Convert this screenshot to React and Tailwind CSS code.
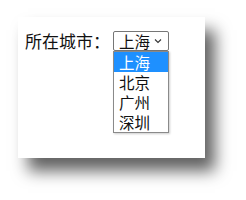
import React from 'react';

const cities = ['上海', '北京', '广州', '深圳'];

const App = () => {
  const [selected] = React.useState('上海');

  return (
    <div className="w-[246px] h-[200px] bg-white pt-[17px] pl-[18px] font-['Noto_Sans_CJK_SC',sans-serif]">
      <div className="w-[187px] h-[141px] bg-white shadow-[10px_13px_15px_rgba(0,0,0,0.62)] px-[7px] pt-[13px]">
        <div className="flex items-start">
          <span className="text-[17px] leading-[20px] text-[#111] mt-[1px]">所在城市：</span>
          <div className="relative ml-[3px] mt-[1px]">
            <div className="w-[56px] h-[20px] border border-[#767676] rounded-[2px] flex items-center pl-[5px] text-[15.5px] leading-[18px] text-[#111]">
              <span>{selected}</span>
              <svg className="ml-[4px]" width="8" height="6" viewBox="0 0 8 6" fill="none">
                <path d="M1 1.5 L4 4.5 L7 1.5" stroke="#333" strokeWidth="1.1" />
              </svg>
            </div>
            <div className="absolute left-0 top-[20px] w-[56px] border border-[#8a8a8a] bg-white shadow-[1px_1px_2px_rgba(0,0,0,0.2)]">
              {cities.map((c) => (
                <div
                  key={c}
                  className={
                    c === selected
                      ? 'h-[20px] pl-[5px] text-[15.5px] leading-[20px] bg-[#1e90ff] text-white'
                      : 'h-[20px] pl-[5px] text-[15.5px] leading-[20px] text-[#111]'
                  }
                >
                  {c}
                </div>
              ))}
            </div>
          </div>
        </div>
      </div>
    </div>
  );
};

export default App;
